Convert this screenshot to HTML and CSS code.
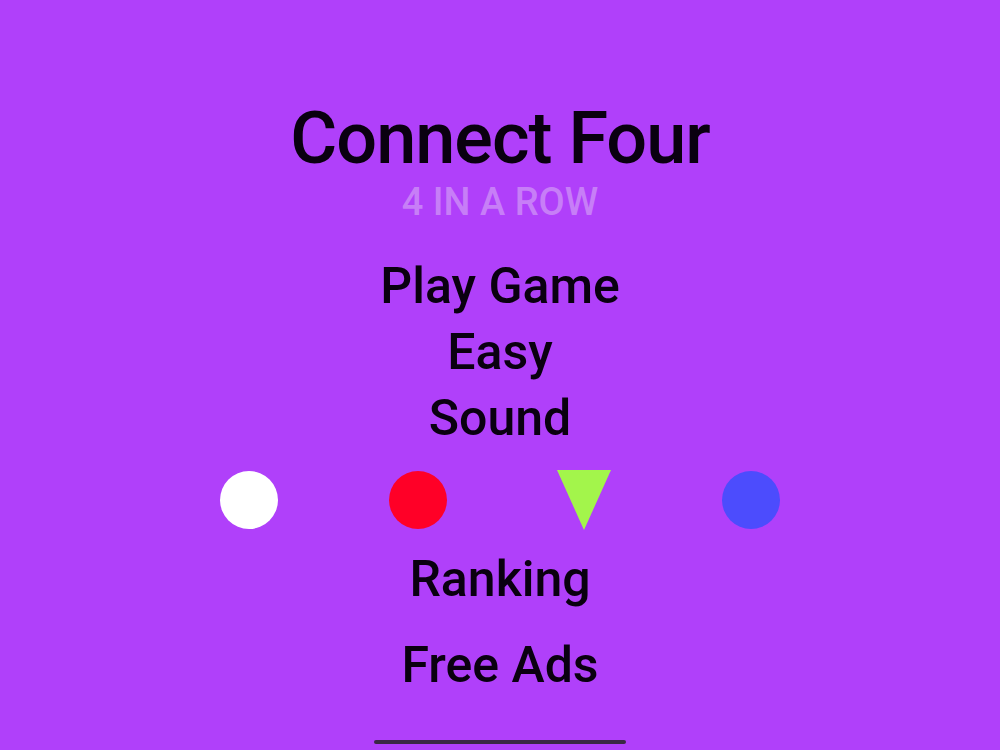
FILE: index.html
```html
<!DOCTYPE html>
<html>
<head>
<meta charset="utf-8">
<link rel="stylesheet" href="styles.css">
</head>
<body>
<div class="screen">
  <header class="head">
    <h1 class="title">Connect Four</h1>
    <div class="subtitle">4 IN A ROW</div>
  </header>
  <nav class="menu">
    <div class="item">Play Game</div>
    <div class="item">Easy</div>
    <div class="item">Sound</div>
  </nav>
  <div class="pieces">
    <span class="disc white"></span>
    <span class="disc red"></span>
    <svg class="tri" width="54" height="60" viewBox="0 0 54 60"><polygon points="0,0 54,0 27,60" fill="#a3f54b"/></svg>
    <span class="disc blue"></span>
  </div>
  <div class="item ranking">Ranking</div>
  <div class="item ads">Free Ads</div>
  <div class="home-bar"></div>
</div>
</body>
</html>
```
FILE: styles.css
```css
html, body {
  margin: 0;
  padding: 0;
}
body {
  background: #b040fa;
  font-family: Roboto, "Liberation Sans", sans-serif;
  color: #0a0010;
}
.screen {
  width: 1000px;
  height: 750px;
  display: flex;
  flex-direction: column;
  align-items: center;
  overflow: hidden;
}
.head {
  display: flex;
  flex-direction: column;
  align-items: center;
  margin-top: 98px;
}
.title {
  margin: 0;
  font-size: 72px;
  font-weight: 500;
  line-height: 82px;
  letter-spacing: -1px;
}
.subtitle {
  font-size: 38px;
  font-weight: 500;
  color: #c77ef7;
  line-height: 40px;
  margin-top: 2px;
}
.menu {
  display: flex;
  flex-direction: column;
  align-items: center;
  margin-top: 31px;
}
.item {
  font-size: 50px;
  font-weight: 500;
  line-height: 66px;
}
.pieces {
  width: 560px;
  display: flex;
  justify-content: space-between;
  align-items: center;
  margin-top: 19px;
}
.disc {
  width: 58px;
  height: 58px;
  border-radius: 50%;
  display: block;
}
.white { background: #ffffff; }
.red { background: #ff0027; }
.blue { background: #4c4cfd; }
.tri { display: block; }
.ranking { margin-top: 16px; }
.ads { margin-top: 20px; }
.home-bar {
  margin-top: 42px;
  width: 252px;
  height: 4px;
  border-radius: 2px;
  background: #3a2845;
}
```
